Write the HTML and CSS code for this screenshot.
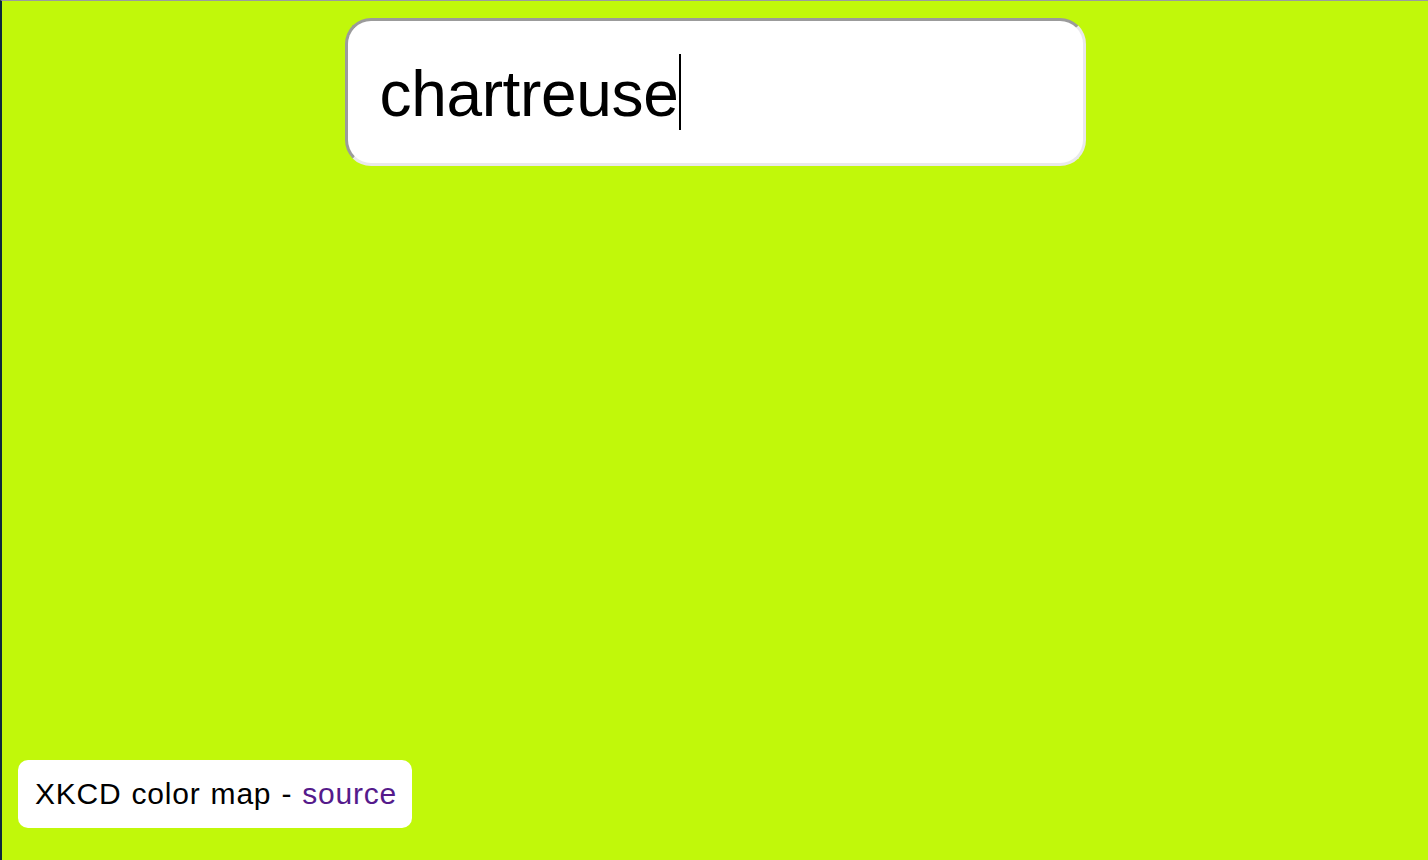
FILE: index.html
```html
<!DOCTYPE html>
<html lang="en">
<head>
<meta charset="utf-8">
<title>XKCD color map</title>
<link rel="stylesheet" href="styles.css">
</head>
<body>
<div class="page">
  <div class="search">
    <div class="query"><span class="query-text">chartreuse</span><span class="caret"></span></div>
  </div>
  <div class="footer">XKCD color map - <a class="source" href="#">source</a></div>
</div>
</body>
</html>
```

FILE: styles.css
```css
* { box-sizing: border-box; }
html, body { margin: 0; padding: 0; height: 100%; }
body {
  font-family: "Liberation Sans", Arial, Helvetica, sans-serif;
  background: #c1f80a;
  border-top: 1px solid #9c9c9c;
  border-left: 2px solid #0c2a3a;
}
.page {
  height: 100%;
  display: flex;
  flex-direction: column;
  align-items: stretch;
}
.search {
  display: flex;
  justify-content: center;
  padding-top: 17px;
}
.query {
  width: 741px;
  height: 148px;
  background: #fff;
  border: 3px solid;
  border-color: #9b9b9b #e9e9eb #e9e9eb #9b9b9b;
  border-radius: 26px;
  padding: 33px 0 0 32px;
  display: flex;
  align-items: flex-start;
}
.query-text {
  font-size: 64px;
  line-height: 64px;
  margin-top: 8px;
  color: #000;
  letter-spacing: -0.35px;
}
.caret {
  width: 1.5px;
  height: 76px;
  background: #000;
  margin-left: 1px;
}
.footer {
  margin-top: auto;
  margin-left: 16px;
  margin-bottom: 32px;
  align-self: flex-start;
  background: #fff;
  border-radius: 10px;
  height: 68px;
  line-height: 67px;
  padding: 0 15px 0 17px;
  font-size: 30px;
  word-spacing: 1px;
  letter-spacing: 0.78px;
  color: #000;
}
.source {
  color: #551a8b;
  text-decoration: none;
}
```
